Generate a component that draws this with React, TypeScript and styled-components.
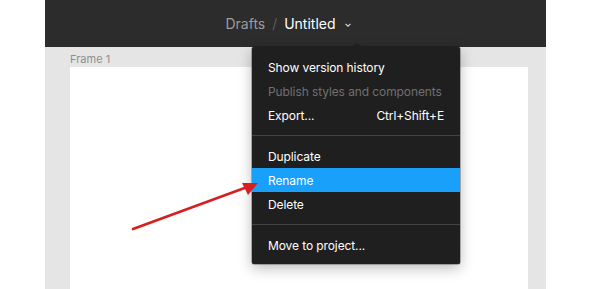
import styled, { createGlobalStyle } from 'styled-components'

const GlobalStyle = createGlobalStyle`
  html, body {
    margin: 0;
    padding: 0;
    background: #ffffff;
    font-family: Inter, "Noto Sans", "Liberation Sans", sans-serif;
    -webkit-font-smoothing: antialiased;
  }
`

type MenuEntry =
  | { kind: 'item'; label: string; shortcut?: string; disabled?: boolean; active?: boolean }
  | { kind: 'sep' }

const MENU: MenuEntry[] = [
  { kind: 'item', label: 'Show version history' },
  { kind: 'item', label: 'Publish styles and components', disabled: true },
  { kind: 'item', label: 'Export...', shortcut: 'Ctrl+Shift+E' },
  { kind: 'sep' },
  { kind: 'item', label: 'Duplicate' },
  { kind: 'item', label: 'Rename', active: true },
  { kind: 'item', label: 'Delete' },
  { kind: 'sep' },
  { kind: 'item', label: 'Move to project...' },
]

export default function App() {
  return (
    <>
      <GlobalStyle />
      <Window>
        <TopBar>
          <Crumb>Drafts</Crumb>
          <Slash>/</Slash>
          <FileName>Untitled</FileName>
          <Chevron width="8" height="6" viewBox="0 0 8 6">
            <path d="M1.5 1.8 L4 4.2 L6.5 1.8" fill="none" stroke="#d8d8d8" strokeWidth="1.1" />
          </Chevron>
        </TopBar>
        <Canvas>
          <FrameLabel>Frame 1</FrameLabel>
          <Frame />
        </Canvas>

        <Menu>
          <Caret />
          {MENU.map((entry, i) =>
            entry.kind === 'sep' ? (
              <Separator key={i} />
            ) : (
              <Item key={i} $disabled={entry.disabled} $active={entry.active}>
                <span>{entry.label}</span>
                {entry.shortcut && <span>{entry.shortcut}</span>}
              </Item>
            )
          )}
        </Menu>

        <Pointer width="140" height="60" viewBox="0 0 140 60">
          <line x1="3" y1="57" x2="120" y2="14" stroke="#d61f1f" strokeWidth="2.6" strokeLinecap="round" />
          <polygon points="128,11 112,11 118,23" fill="#d61f1f" />
        </Pointer>
      </Window>
    </>
  )
}

const Window = styled.div`
  position: relative;
  width: 501px;
  height: 289px;
  margin: 0 auto;
  display: flex;
  flex-direction: column;
  overflow: hidden;
`

const TopBar = styled.div`
  height: 47px;
  flex-shrink: 0;
  background: #2c2c2c;
  display: flex;
  align-items: center;
  justify-content: center;
  padding-right: 14px;
  font-size: 14px;
`

const Crumb = styled.span`
  color: #9b9b9b;
`

const Slash = styled.span`
  color: #6a6a6a;
  margin: 0 7px;
  font-weight: 300;
`

const FileName = styled.span`
  color: #ffffff;
`

const Chevron = styled.svg`
  margin-left: 8px;
  margin-top: 3px;
`

const Canvas = styled.div`
  flex: 1;
  background: #e5e5e5;
  display: flex;
  flex-direction: column;
  padding: 0 18px 0 25px;
`

const FrameLabel = styled.div`
  height: 20px;
  display: flex;
  align-items: center;
  padding-top: 3px;
  box-sizing: border-box;
  font-size: 11px;
  color: #8e8e8e;
`

const Frame = styled.div`
  flex: 1;
  background: #ffffff;
`

const Menu = styled.div`
  position: absolute;
  left: 207px;
  top: 47px;
  width: 208px;
  padding: 8px 0 7px;
  background: #1f1f1f;
  border-radius: 2px;
  box-shadow: 0 4px 14px rgba(0, 0, 0, 0.28), 0 0 0 0.5px rgba(0, 0, 0, 0.5);
  font-size: 12px;
`

const Caret = styled.div`
  position: absolute;
  top: -4px;
  left: 100px;
  width: 0;
  height: 0;
  border-left: 5px solid transparent;
  border-right: 5px solid transparent;
  border-bottom: 4px solid #1f1f1f;
`

const Item = styled.div<{ $disabled?: boolean; $active?: boolean }>`
  height: 24px;
  padding: 0 16px;
  display: flex;
  align-items: center;
  justify-content: space-between;
  white-space: nowrap;
  letter-spacing: -0.1px;
  color: ${(p) => (p.$disabled ? '#6f6f6f' : '#ffffff')};
  background: ${(p) => (p.$active ? '#18a0fb' : 'transparent')};
`

const Separator = styled.div`
  height: 1px;
  background: #444444;
  margin: 8px 0;
`

const Pointer = styled.svg`
  position: absolute;
  left: 85px;
  top: 172px;
`
